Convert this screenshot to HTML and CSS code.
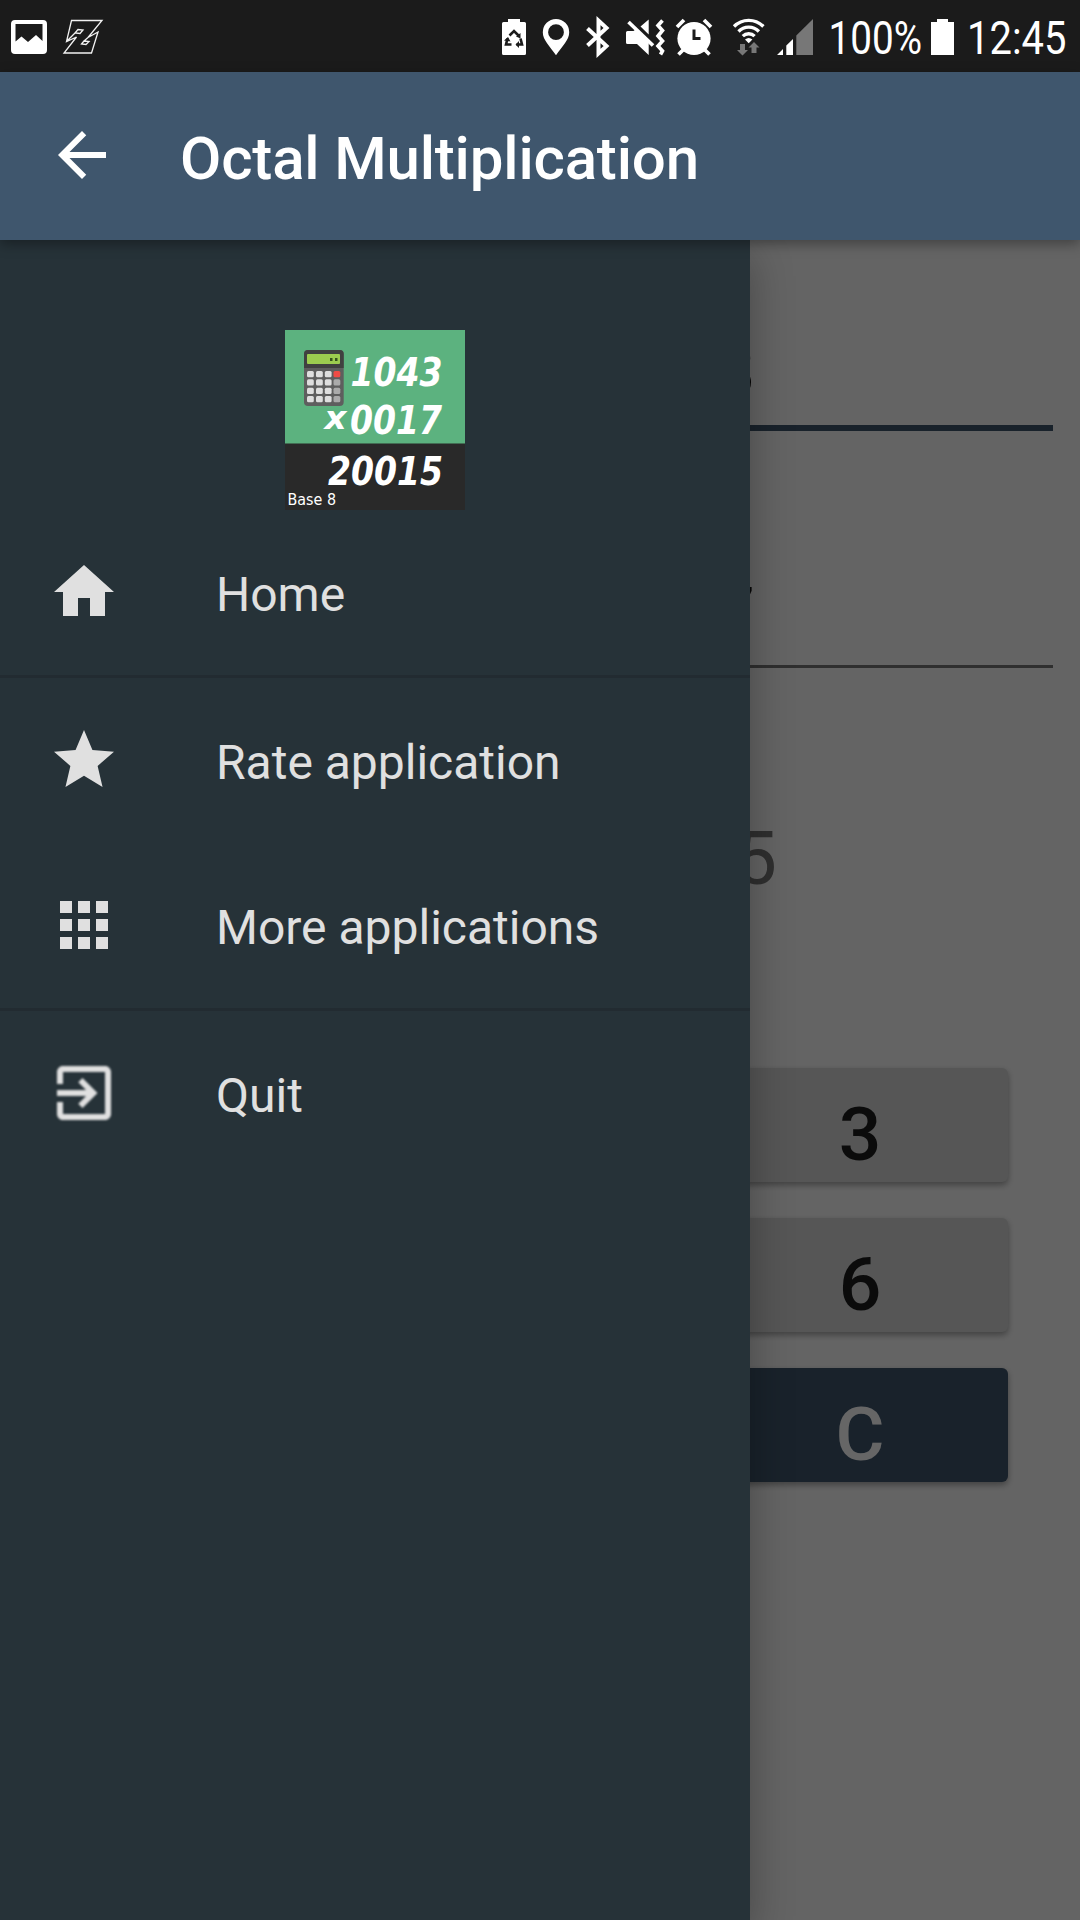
FILE: index.html
```
<!DOCTYPE html>
<html lang="en">
<head>
  <meta charset="UTF-8">
  <meta name="viewport" content="width=device-width, initial-scale=1.0">
  <title>Octal Multiplication</title>
  <link rel="stylesheet" href="styles.css">
</head>
<body>
  <div class="status-bar">
    <svg width="140" height="72" viewBox="0 0 140 72">
      <path fill="#fff" fill-rule="evenodd" d="M15 20h28a4 4 0 0 1 4 4v26a4 4 0 0 1-4 4H15a4 4 0 0 1-4-4V24a4 4 0 0 1 4-4zM15.500 24v17.500l6-5 6.500 5.500 8-7 6.500 6V24z"/>
      <path fill="none" stroke="#f2f2f2" stroke-width="1.300" d="M71.500 20.500H102L88 37.500l10-5.500-6.500 21H64l12.500-16-10 4.500zM75 33l3-3.500 5 .5-3 3.500zM81.500 44l2.500-3 5 .5-3 3zM66.500 41.500L75 33M88 37.500L84 41"/>
    </svg>

    <div class="status-right">
      <svg width="44" height="72" viewBox="490 0 44 72">
        <path fill="#fff" d="M502 23.500q0-1.500 1.500-1.500h4.500v-3h12v3h4.500q1.500 0 1.500 1.500v30q0 1.500-1.500 1.500h-21q-1.500 0-1.500-1.500z"/>
        <g fill="none" stroke="#1b1b1b" stroke-width="2.600">
          <path d="M509.500 35.500l4.500-4.500 4.500 4.500"/>
          <path d="M507.500 38.500l-1.500 6h5.500"/>
          <path d="M520.500 38.500l1.500 6h-5.500"/>
        </g>
        <path fill="#1b1b1b" d="M515.500 44.500l3.500-3.500v7zM504 40.500l4-3.500 2.500 4.500zM516 36.500l4.500-3.500v5.500z"/>
      </svg>
      <svg width="46" height="72" viewBox="534 0 46 72">
        <path fill="#fff" fill-rule="evenodd" d="M556 19a13.200 13.200 0 0 1 13.200 13.200c0 8-7 13.800-13.200 23-6.200-9.200-13.200-15-13.200-23A13.200 13.200 0 0 1 556 19zm0 5.300a7.900 7.900 0 1 0 0 15.800 7.900 7.900 0 0 0 0-15.800z"/>
      </svg>
      <svg width="40" height="72" viewBox="580 0 40 72">
        <path fill="none" stroke="#fff" stroke-width="4" d="M587.500 28.500l19 17.500-8 7.500v-33l8 7.500-19 17.500"/>
      </svg>
      <svg width="50" height="72" viewBox="620 0 50 72">
        <path fill="#fff" d="M626 32.500q0-1.500 1.500-1.500h6l2-1.500 13.200 13V55L637 44h-9.500q-1.500 0-1.500-1.500zM640.500 26.500l8.200-7v15z"/>
        <path stroke="#fff" stroke-width="3.700" d="M628.500 22l24.500 23.500"/>
        <path fill="none" stroke="#fff" stroke-width="3.600" d="M662.500 20.500l-4.500 5 4.500 5-4.500 5.500 4.500 5-4.500 5 4.500 5-2 3.500"/>
      </svg>
      <svg width="56" height="72" viewBox="670 0 56 72">
        <circle cx="694" cy="38.500" r="16.600" fill="#fff"/>
        <path stroke="#fff" stroke-width="3.700" d="M677 27l7-7M711 27l-7-7M683 50l-4.500 4.500M705 50l4.500 4.500"/>
        <path fill="none" stroke="#1b1b1b" stroke-width="3" d="M694 29.500v9h6.500"/>
      </svg>
      <svg width="48" height="72" viewBox="726 0 48 72">
        <path fill="none" stroke="#fff" stroke-width="3.300" d="M734 26.500a20.500 20.500 0 0 1 29.400 0M738.500 31.500a14.300 14.300 0 0 1 20.400 0M742.800 36.200a8.300 8.300 0 0 1 11.800 0"/>
        <path fill="#fff" d="M745 39.500q3.700-3 7.400 0l-3.700 3.800z"/>
        <path fill="#777" d="M740 44h5v6h3l-5.500 5.500-5.500-5.500h3zM751.500 53v-5.500h-3l5.500-5.500 5.500 5.500h-3V53z"/>
      </svg>
      <svg width="50" height="72" viewBox="774 0 50 72">
        <path fill="#fff" d="M777 55l6-6v6zM786.300 45.500l6.700-6.500v16h-6.700z"/>
        <path fill="#777" d="M796.300 35.500L813 19v36h-16.700z"/>
      </svg>
      <svg class="status-text" width="102" height="72" viewBox="824 0 102 72">
        <text x="828.500" y="54" textLength="93.500" lengthAdjust="spacingAndGlyphs">100%</text>
      </svg>
      <svg width="36" height="72" viewBox="926 0 36 72">
        <path fill="#fff" d="M931 22h6v-3h11v3h6v33h-23z"/>
      </svg>
      <svg class="status-text" width="118" height="72" viewBox="962 0 118 72">
        <text x="967" y="54" textLength="99.500" lengthAdjust="spacingAndGlyphs">12:45</text>
      </svg>
    </div>
  </div>

  <header class="app-bar">
    <svg class="icon" viewBox="0 0 24 24"><path d="M20 11H7.830l5.590-5.590L12 4l-8 8 8 8 1.410-1.410L7.830 13H20v-2z"/></svg>
    <h1>Octal Multiplication</h1>
  </header>

  <div class="screen">
    <main class="calculator">
      <div class="field focused">1043</div>
      <div class="field">0017</div>
      <div class="answer">20015</div>
      <div class="keypad">
        <button>1</button>
        <button>2</button>
        <button>3</button>
        <button>4</button>
        <button>5</button>
        <button>6</button>
        <button>7</button>
        <button>0</button>
        <button class="clear">C</button>
      </div>
    </main>

    <div class="scrim"></div>

    <nav class="drawer">
      <svg class="logo" width="180" height="180" viewBox="0 0 180 180">
        <rect width="180" height="180" fill="#292929"/>
        <rect width="180" height="113.500" fill="#5cb27f"/>
        <rect x="19" y="20" width="39.700" height="56" rx="4" fill="#5e5e5e"/>
        <path fill="#404040" d="M19 24q0-4 4-4h31.700q4 0 4 4v14H19z"/>
        <rect x="22" y="24" width="33" height="10" rx="1" fill="#9ccc4f"/>
        <path fill="#35521c" d="M45 28h2.500v3H45zM50 28h2.500v3H50z"/>
        <g fill="#dedede">
          <rect x="22" y="41" width="6.800" height="6.200" rx="1.500"/>
          <rect x="31" y="41" width="6.800" height="6.200" rx="1.500"/>
          <rect x="39.800" y="41" width="6.800" height="6.200" rx="1.500"/>
          <rect x="22" y="49.300" width="6.800" height="6.200" rx="1.500"/>
          <rect x="31" y="49.300" width="6.800" height="6.200" rx="1.500"/>
          <rect x="39.800" y="49.300" width="6.800" height="6.200" rx="1.500"/>
          <rect x="22" y="57.800" width="6.800" height="6.200" rx="1.500"/>
          <rect x="31" y="57.800" width="6.800" height="6.200" rx="1.500"/>
          <rect x="39.800" y="57.800" width="6.800" height="6.200" rx="1.500"/>
          <rect x="22" y="66" width="6.800" height="6.200" rx="1.500"/>
          <rect x="31" y="66" width="6.800" height="6.200" rx="1.500"/>
          <rect x="39.800" y="66" width="6.800" height="6.200" rx="1.500"/>
        </g>
        <rect x="48.500" y="41" width="6.800" height="6.200" rx="1.500" fill="#f04b45"/>
        <g fill="#aaa">
          <rect x="48.500" y="49.300" width="6.800" height="6.200" rx="1.500"/>
          <rect x="48.500" y="57.800" width="6.800" height="6.200" rx="1.500"/>
          <rect x="48.500" y="66" width="6.800" height="6.200" rx="1.500"/>
        </g>
        <g class="logo-digits">
          <text x="65.500" y="55.500" textLength="92" lengthAdjust="spacingAndGlyphs">1043</text>
          <text class="times" x="39.500" y="99" textLength="22" lengthAdjust="spacingAndGlyphs">x</text>
          <text x="65" y="103.500" textLength="92" lengthAdjust="spacingAndGlyphs">0017</text>
          <text x="43" y="155" textLength="115" lengthAdjust="spacingAndGlyphs">20015</text>
        </g>
        <text class="logo-base" x="2.500" y="175" textLength="48.500" lengthAdjust="spacingAndGlyphs">Base 8</text>
      </svg>

      <ul class="menu">
        <li>
          <svg class="icon" viewBox="0 0 24 24"><path d="M10 20v-6h4v6h5v-8h3L12 3 2 12h3v8z"/></svg>
          <span>Home</span>
        </li>
        <li class="divided">
          <svg class="icon" viewBox="0 0 24 24"><path d="M12 17.270L18.180 21l-1.640-7.030L22 9.240l-7.190-.610L12 2 9.190 8.630 2 9.240l5.460 4.730L5.820 21z"/></svg>
          <span>Rate application</span>
        </li>
        <li>
          <svg class="icon" viewBox="0 0 24 24"><path d="M4 8h4V4H4v4zm6 12h4v-4h-4v4zm-6 0h4v-4H4v4zm0-6h4v-4H4v4zm6 0h4v-4h-4v4zm6-10v4h4V4h-4zm-6 4h4V4h-4v4zm6 6h4v-4h-4v4zm0 6h4v-4h-4v4z"/></svg>
          <span>More applications</span>
        </li>
        <li class="divided">
          <svg class="icon soft" viewBox="0 0 24 24"><path d="M10.090 15.590L11.500 17l5-5-5-5-1.410 1.410L12.670 11H3v2h9.670l-2.580 2.590zM19 3H5c-1.110 0-2 .9-2 2v4h2V5h14v14H5v-4H3v4c0 1.100.890 2 2 2h14c1.100 0 2-.9 2-2V5c0-1.100-.9-2-2-2z"/></svg>
          <span>Quit</span>
        </li>
      </ul>
    </nav>
  </div>
</body>
</html>
```

FILE: styles.css
```
* {
  box-sizing: border-box;
}
body {
  margin: 0;
  height: 1920px;
  display: flex;
  flex-direction: column;
  overflow: hidden;
  font-family: Roboto, sans-serif;
  background-color: #fafafa;
}
svg {
  display: block;
  flex: none;
}
.icon {
  width: 72px;
  height: 72px;
  fill: currentColor;
}
.icon.soft {
  filter: blur(0.8px);
}

/* status bar */
.status-bar {
  height: 72px;
  flex: none;
  display: flex;
  justify-content: space-between;
  background-color: #1b1b1b;
}
.status-right {
  display: flex;
}
.status-text {
  font-size: 46px;
  fill: #fff;
}

/* app bar */
.app-bar {
  position: relative;
  z-index: 2;
  height: 168px;
  flex: none;
  display: flex;
  align-items: center;
  padding: 0 46px 2px;
  color: #fff;
  background-color: #3f566d;
  box-shadow: 0 4px 12px rgba(0, 0, 0, 0.35);
}
.app-bar h1 {
  margin: 6px 0 0 62px;
  font-size: 60px;
  font-weight: 500;
  letter-spacing: -0.17px;
  white-space: nowrap;
}

/* calculator behind the drawer */
.screen {
  position: relative;
  flex: 1;
}
.calculator {
  padding: 0 27px;
}
.field {
  height: 237px;
  padding: 139px 298px 0 0;
  font-size: 75px;
  line-height: 88px;
  text-align: right;
  color: #111;
  border-bottom: 3px solid #757575;
}
.field.focused {
  height: 191px;
  padding: 87px 297px 0 0;
  border-bottom: 6px solid #3f566d;
}
.answer {
  margin-top: 146px;
  padding-right: 276px;
  font-size: 75px;
  line-height: 88px;
  text-align: right;
  color: #757575;
}
.keypad {
  display: grid;
  grid-template-columns: repeat(3, 296px);
  grid-auto-rows: 114px;
  gap: 36px 24px;
  justify-content: center;
  margin-top: 166px;
}
.keypad button {
  padding: 18px 0 0;
  border: none;
  border-radius: 6px;
  font-family: inherit;
  font-size: 75px;
  font-weight: 500;
  line-height: 88px;
  color: #1c1c1c;
  background-color: #d6d7d7;
  box-shadow: 0 3px 6px rgba(0, 0, 0, 0.35);
}
.keypad .clear {
  color: #fff;
  background-color: #3f566d;
}
.scrim {
  position: absolute;
  inset: 0;
  background-color: rgba(0, 0, 0, 0.6);
}

/* drawer */
.drawer {
  position: absolute;
  top: 0;
  bottom: 0;
  left: 0;
  width: 750px;
  padding-top: 90px;
  color: #e0e0e0;
  background-color: #263238;
  box-shadow: 0 16px 40px rgba(0, 0, 0, 0.3);
}
.logo {
  margin: 0 auto;
}
.logo-digits {
  font-family: "DejaVu Sans Condensed", "DejaVu Sans", sans-serif;
  font-size: 39px;
  font-weight: bold;
  font-style: italic;
  fill: #fff;
}
.logo-digits .times {
  font-size: 32px;
}
.logo-base {
  font-family: "DejaVu Sans", sans-serif;
  font-size: 15px;
  fill: #fff;
}
.menu {
  margin: 0;
  padding: 0;
  list-style: none;
}
.menu li {
  height: 165px;
  display: flex;
  align-items: center;
  padding: 0 48px 1px;
  font-size: 48px;
}
.menu li.divided {
  height: 168px;
  border-top: 3px solid #222b31;
}
.menu span {
  margin: 5px 0 0 96px;
}
```
